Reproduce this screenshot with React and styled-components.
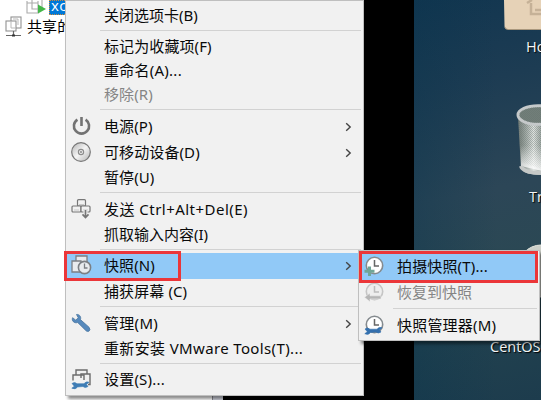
import React from "react";
import styled, { createGlobalStyle } from "styled-components";

const Global = createGlobalStyle`
  * { box-sizing: border-box; }
  body { margin: 0; overflow: hidden; }
`;

const Screen = styled.div`
  position: relative;
  display: flex;
  width: 541px;
  height: 400px;
  overflow: hidden;
  background: #000;
  font-family: "Noto Sans", "Noto Sans CJK SC", sans-serif;
  font-size: 15px;
`;

const Library = styled.aside`
  width: 212px;
  background: #fff;
  flex: none;
`;

const Splitter = styled.div`
  width: 11px;
  flex: none;
  background: #cfd1dc;
  border-left: 1px solid #8c8c94;
`;

const Letterbox = styled.div`
  width: 191px;
  flex: none;
`;

const TreeRow = styled.div`
  display: flex;
  align-items: center;
  height: ${(p) => p.$height}px;
  padding-left: ${(p) => p.$indent}px;
  white-space: nowrap;
`;

const TreeLabel = styled.span`
  margin: -2px 0 0 4px;
  line-height: 20px;
  letter-spacing: 0.1px;
`;

const SelectedLabel = styled.span`
  width: 60px;
  height: 15px;
  margin-left: 3px;
  padding-left: 1px;
  border: 1px dotted #d08a3a;
  background: #0078d7;
  color: #fff;
  font-size: 15px;
  font-family: "Open Sans", sans-serif;
  letter-spacing: 0.3px;
  line-height: 9px;
`;

const Desktop = styled.main`
  position: relative;
  flex: 1;
  overflow: hidden;
  background: linear-gradient(168deg, #123650 0%, #1d3c53 22%, #2c4657 48%, #2b4854 65%, #21414f 82%, #1d3c4d 100%);
`;

const DesktopShade = styled.div`
  height: 100%;
  background: linear-gradient(90deg, rgba(8, 52, 76, 0.35), transparent 65%);
`;

const DesktopItem = styled.div`
  position: absolute;
  left: ${(p) => p.$x}px;
  top: ${(p) => p.$y}px;
  line-height: 0;
`;

const DesktopLabel = styled(DesktopItem)`
  color: #f4f6f7;
  font-family: "Open Sans", sans-serif;
  font-size: 14.5px;
  line-height: 20px;
  white-space: nowrap;
  text-shadow: 1px 1px 1px #000;
`;

const MenuPanel = styled.div`
  position: absolute;
  left: ${(p) => p.$x}px;
  top: ${(p) => p.$y}px;
  width: ${(p) => p.$width}px;
  height: ${(p) => p.$height}px;
  padding: ${(p) => p.$padTop}px 1px 2px;
  background: #f1f1f1;
  border: 1px solid #bfbfbf;
  box-shadow: 3px 3px 3px rgba(0, 0, 0, 0.45);
`;

const MenuRow = styled.div`
  display: flex;
  align-items: center;
  height: ${(p) => p.$height || 24}px;
  padding-right: 10px;
  background: ${(p) => (p.$active ? "#91c9f7" : "transparent")};
  color: ${(p) => (p.$disabled ? "#858585" : "#0a0a0a")};
`;

const IconSlot = styled.span`
  display: flex;
  width: 37px;
  padding-left: 4px;
  flex: none;
`;

const MenuText = styled.span`
  flex: 1;
  margin-top: -2px;
  line-height: 22px;
  white-space: pre;
  letter-spacing: ${(p) => p.$spacing || 0}px;
`;

const Separator = styled.div`
  height: 1px;
  margin: 2px 1px ${(p) => p.$after}px 33px;
  background: #d2d2d2;
`;

const Marker = styled.div`
  position: absolute;
  left: ${(p) => p.$x}px;
  top: ${(p) => p.$y}px;
  width: ${(p) => p.$width}px;
  height: ${(p) => p.$height}px;
  border: 3px solid #eb3639;
`;

const Drawing = ({ w = 22, h = 22, box, children }) => (
  <svg width={w} height={h} viewBox={box || `0 0 ${w} ${h}`} fill="none">{children}</svg>
);

const Chevron = () => (
  <Drawing w={7} h={10}><path d="M1.2 1.2 5.2 5 1.2 8.8" stroke="#444" strokeWidth="1.4" /></Drawing>
);

const PowerIcon = () => (
  <Drawing>
    <path d="M6.4 3.6A7.6 7.6 0 1 0 14.6 3.6" stroke="#737373" strokeWidth="2.6" />
    <path d="M10.5 1V10" stroke="#737373" strokeWidth="2.6" />
  </Drawing>
);

const DiscIcon = () => (
  <Drawing>
    <defs><linearGradient id="disc" x1="0" y1="0" x2="1" y2="1"><stop stopColor="#b4b4b4" /><stop offset=".5" stopColor="#f4f4f4" /><stop offset="1" stopColor="#b4b4b4" /></linearGradient></defs>
    <circle cx="10" cy="10" r="9.3" fill="url(#disc)" stroke="#777" strokeWidth="1.2" />
    <circle cx="10" cy="10" r="2.6" fill="#eee" stroke="#8c8c8c" strokeWidth="1.2" />
    <circle cx="10" cy="10" r="1" fill="#888" />
  </Drawing>
);

const KeysIcon = () => (
  <Drawing>
    <g fill="#f1f1f1" stroke="#777" strokeWidth="1.2">
      <rect x="6.5" y=".7" width="8" height="6.3" rx="1" />
      <rect x="1" y="7" width="9" height="6" rx="1" />
      <rect x="10" y="7" width="9" height="6" rx="1" />
    </g>
    <path d="M8 5.5H13M3 11H8M12 11H17" stroke="#c8c8c8" />
    <path d="M14.5 11V18M11.5 15 14.5 18.5 17.5 15" stroke="#f1f1f1" strokeWidth="4" />
    <path d="M14.5 11V18.5M11.5 15.4 14.5 18.6 17.5 15.4" stroke="#777" strokeWidth="1.7" />
  </Drawing>
);

const SnapshotIcon = () => (
  <Drawing>
    <g stroke="#7b7f84" strokeWidth="1.3" fill="#e8ebee">
      <path d="M5 1H16V12H5Z" /><path d="M1 6H10V17H1Z" />
      <circle cx="13.5" cy="12.5" r="6.1" strokeWidth="1.6" />
      <path d="M13.5 8.5V13H16.5" fill="none" />
    </g>
  </Drawing>
);

const WrenchIcon = () => (
  <Drawing>
    <path d="M5.5 1.5C8 1 10.6 3.5 9.4 6.6L18 14.2Q20 17 17.8 18.3Q15.6 19 14 16.7L6.7 9.5C3.5 10.7.2 7.8 1.6 4.7L4.8 7.2 7.2 4.7Z" fill="#5689bc" stroke="#48759f" strokeWidth=".8" />
  </Drawing>
);

const smallWrench = "M1 12.5Q3.5 10.5 6 12.7L13 12.7Q15 10 18 11.2L15.5 13.5 17 15.5Q14 17.5 12 15.5L6.5 16Q4.5 19 .8 17.2L3.3 15.2Z";

const SettingsIcon = () => (
  <Drawing>
    <g stroke="#6c6c6c" strokeWidth="1.4">
      <path d="M5 6V1H16V5" /><path d="M10 9V5H19V15.5H17" /><path d="M2 11.5V6H13V11" />
    </g>
    <path d={smallWrench} transform="translate(0 2)" fill="#3f7db5" stroke="#3f7db5" strokeWidth=".6" />
  </Drawing>
);

const ClockIcon = ({ kind }) => {
  const muted = kind === "revert";
  return (
    <Drawing>
      <circle cx="10.5" cy="9.5" r="8.2" fill={muted ? "#eee" : "#fff"} stroke={muted ? "#c5c5c5" : "#858b8f"} strokeWidth="1.6" />
      <path d="M10.5 4V10H15" stroke={muted ? "#bdbdbd" : "#666"} strokeWidth="1.5" />
      {kind === "take" && <path d="M5.5 10.5V20M.5 15.2H10.5" stroke="#70a698" strokeWidth="3" />}
      {muted && <path d="M.5 15.3 6 11V13.8H17V17H6V19.8Z" fill="#b5b5b5" stroke="#eee" strokeWidth=".6" />}
      {kind === "manage" && <path d={smallWrench} transform="translate(0 1.5)" fill="#3470ae" stroke="#3470ae" strokeWidth=".6" />}
    </Drawing>
  );
};

const MachinesIcon = () => (
  <Drawing w={18} h={22}>
    <g fill="#fff" stroke="#929292" strokeWidth="1.1">
      <rect x="6" y="1" width="10" height="11" /><rect x="1" y="5" width="10" height="10" />
    </g>
    <path d="M6 5V12H11M8 3H13V9" stroke="#b9b9b9" />
    <path d="M8.5 15V19M1 19.5H16" stroke="#666" strokeWidth="1.2" />
    <path d="M7 19.5H10" stroke="#333" strokeWidth="2" />
  </Drawing>
);

const RunningIcon = () => (
  <Drawing w={20} h={15}>
    <path d="M1 1V13H12V1M6 0V9H16V0M1 3H12" stroke="#aaa" strokeWidth="1.1" />
    <path d="M12 4.5 20 9 12 13.5Z" fill="#43b649" />
  </Drawing>
);

const FolderIcon = () => (
  <Drawing w={37} h={30}>
    <path d="M0 0H37V29H3Q.5 29 .5 26Z" fill="#e6d2b7" />
    <path d="M1 27Q1 29.5 4 29.5H37" stroke="#a9977d" />
    <path d="M23 3 28 0M27 3V14H37M31 10H37" stroke="#c5b197" strokeWidth="2.5" />
  </Drawing>
);

const BinIcon = () => (
  <Drawing w={26} h={74}>
    <defs>
      <linearGradient id="bin" x1="0" x2="1"><stop stopColor="#707975" /><stop offset=".35" stopColor="#a6aeaa" /><stop offset=".65" stopColor="#e0e3e1" /><stop offset="1" stopColor="#969f9b" /></linearGradient>
      <pattern id="mesh" width="2" height="2" patternUnits="userSpaceOnUse"><path d="M0 0H1V1H0ZM1 1H2V2H1Z" fill="#65736c" opacity=".4" /></pattern>
      <linearGradient id="glow" x1="0" y1="0" x2="0" y2="1"><stop offset=".45" stopColor="#fff" stopOpacity="0" /><stop offset="1" stopColor="#fff" stopOpacity=".85" /></linearGradient>
    </defs>
    <path d="M2 12 5 65Q9 71 26 71V10Z" fill="url(#bin)" />
    <path d="M2 12 5 58 26 65V10Z" fill="url(#mesh)" />
    <path d="M4 20 5 62 26 67V20Z" fill="url(#glow)" />
    <path d="M5 62Q7 69 26 69" stroke="#c5c8c7" strokeWidth="4" />
    <ellipse cx="22" cy="11" rx="20" ry="9.3" fill="#727e7a" stroke="#c5c9ca" strokeWidth="3" />
    <ellipse cx="22" cy="11" rx="19" ry="8" fill="url(#mesh)" />
  </Drawing>
);

const DiskTop = () => (
  <Drawing w={26} h={60}>
    <ellipse cx="23" cy="27" rx="24" ry="26" fill="#cccfc8" stroke="#e5e5dd" />
  </Drawing>
);

const mainItems = [
  { text: "关闭选项卡(B)" }, { sep: 4 },
  { text: "标记为收藏项(F)", spacing: 0.1 }, { text: "重命名(A)...", spacing: 0.25 }, { text: "移除(R)", disabled: true, spacing: 0.1 }, { sep: 4 },
  { text: "电源(P)", icon: <PowerIcon />, height: 26, sub: true, spacing: 0.1 },
  { text: "可移动设备(D)", icon: <DiscIcon />, height: 26, sub: true, spacing: 0.1 },
  { text: "暂停(U)", spacing: 0.1 }, { sep: 4 },
  { text: "发送 Ctrl+Alt+Del(E)", icon: <KeysIcon />, height: 26, spacing: 0.47 }, { text: "抓取输入内容(I)" }, { sep: 3 },
  { text: "快照(N)", icon: <SnapshotIcon />, height: 26, sub: true, active: true, spacing: 0.1 },
  { text: "捕获屏幕 (C)", height: 25, spacing: 0.1 }, { sep: 4 },
  { text: "管理(M)", icon: <WrenchIcon />, height: 26, sub: true, spacing: 0.3 },
  { text: "重新安装 VMware Tools(T)...", spacing: 0.36 }, { sep: 3 },
  { text: "设置(S)...", icon: <SettingsIcon />, height: 26, spacing: 0.2 },
];

const snapshotItems = [
  { text: "拍摄快照(T)...", icon: <ClockIcon kind="take" />, height: 27, active: true, spacing: 0.15 },
  { text: "恢复到快照", icon: <ClockIcon kind="revert" />, height: 26, disabled: true }, { sep: 4 },
  { text: "快照管理器(M)", icon: <ClockIcon kind="manage" />, height: 26, spacing: 0.2 },
];

const Menu = ({ items, ...place }) => (
  <MenuPanel {...place}>
    {items.map((item, i) => item.sep ? <Separator key={i} $after={item.sep} /> : (
      <MenuRow key={i} $height={item.height} $active={item.active} $disabled={item.disabled}>
        <IconSlot>{item.icon}</IconSlot>
        <MenuText $spacing={item.spacing}>{item.text}</MenuText>
        {item.sub && <Chevron />}
      </MenuRow>
    ))}
  </MenuPanel>
);

export default function App() {
  return (
    <>
      <Global />
      <Screen>
        <Library>
          <TreeRow $height={15} $indent={26}><RunningIcon /><SelectedLabel>xc</SelectedLabel></TreeRow>
          <TreeRow $height={23} $indent={5}><MachinesIcon /><TreeLabel>共享的虚拟机</TreeLabel></TreeRow>
        </Library>
        <Splitter />
        <Letterbox />
        <Desktop>
          <DesktopShade />
          <DesktopItem $x={90} $y={0}><FolderIcon /></DesktopItem>
          <DesktopLabel $x={112} $y={37}>Home</DesktopLabel>
          <DesktopItem $x={102} $y={104}><BinIcon /></DesktopItem>
          <DesktopLabel $x={115} $y={187}>Trash</DesktopLabel>
          <DesktopItem $x={104} $y={244}><DiskTop /></DesktopItem>
          <DesktopLabel $x={76} $y={337}>CentOS 7</DesktopLabel>
        </Desktop>
        <Menu items={mainItems} $x={65} $y={0} $width={299} $height={396} $padTop={3} />
        <Menu items={snapshotItems} $x={358} $y={250} $width={182} $height={91} $padTop={2} />
        <Marker $x={64} $y={251} $width={117} $height={30} />
        <Marker $x={359} $y={251} $width={179} $height={32} />
      </Screen>
    </>
  );
}
